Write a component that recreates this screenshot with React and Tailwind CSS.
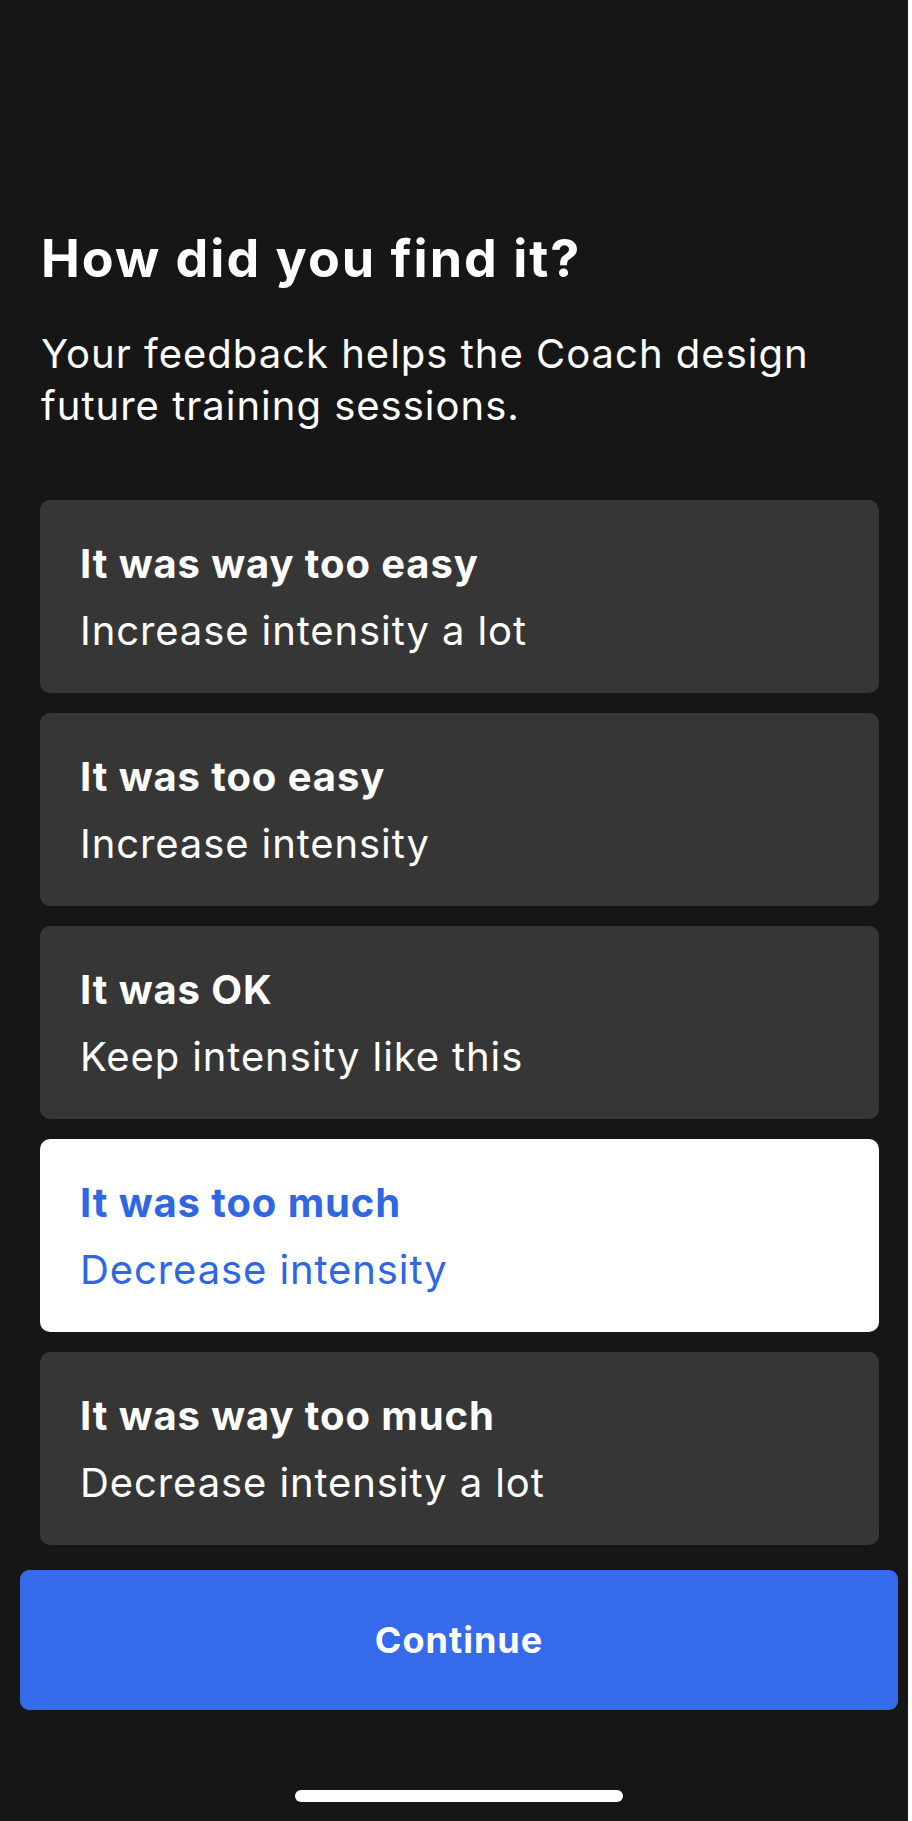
import React from "react";

const options = [
  { title: "It was way too easy", sub: "Increase intensity a lot" },
  { title: "It was too easy", sub: "Increase intensity" },
  { title: "It was OK", sub: "Keep intensity like this" },
  { title: "It was too much", sub: "Decrease intensity", selected: true },
  { title: "It was way too much", sub: "Decrease intensity a lot" },
];

export default function App() {
  return (
    <div
      className="w-[912px] h-[1821px] bg-white flex"
      style={{ fontFamily: "Inter, 'Noto Sans', sans-serif" }}
    >
      <div className="w-[908px] h-full bg-[#161616] flex flex-col">
        <div className="pt-[229px] pl-[41px] pr-[40px]">
          <h1 className="text-[52px] leading-[60px] font-bold text-white tracking-[2px]">
            How did you find it?
          </h1>
          <p className="mt-[39px] text-[40px] leading-[52px] text-white tracking-[1px] w-[820px]">
            Your feedback helps the Coach design future training sessions.
          </p>
        </div>
        <div className="mt-[68px] ml-[40px] w-[839px] flex flex-col gap-[20px]">
          {options.map((o) => (
            <div
              key={o.title}
              className={
                o.selected
                  ? "h-[193px] rounded-[10px] bg-white pl-[40px] pt-[40px]"
                  : "h-[193px] rounded-[10px] bg-[#363636] pl-[40px] pt-[40px]"
              }
            >
              <div
                className={
                  o.selected
                    ? "text-[40px] leading-[48px] font-bold tracking-[0.9px] text-[#2f66e2]"
                    : "text-[40px] leading-[48px] font-bold tracking-[0.9px] text-white"
                }
              >
                {o.title}
              </div>
              <div
                className={
                  o.selected
                    ? "mt-[19px] text-[40px] leading-[48px] tracking-[0.9px] text-[#2f66e2]"
                    : "mt-[19px] text-[40px] leading-[48px] tracking-[0.9px] text-white"
                }
              >
                {o.sub}
              </div>
            </div>
          ))}
        </div>
        <div className="mt-[25px] ml-[20px] w-[878px] h-[140px] rounded-[9px] bg-[#356bea] flex items-center justify-center">
          <span className="text-[36px] font-bold tracking-[1px] text-white">Continue</span>
        </div>
        <div className="mt-[80px] ml-[295px] w-[328px] h-[12px] rounded-full bg-white" />
      </div>
    </div>
  );
}
